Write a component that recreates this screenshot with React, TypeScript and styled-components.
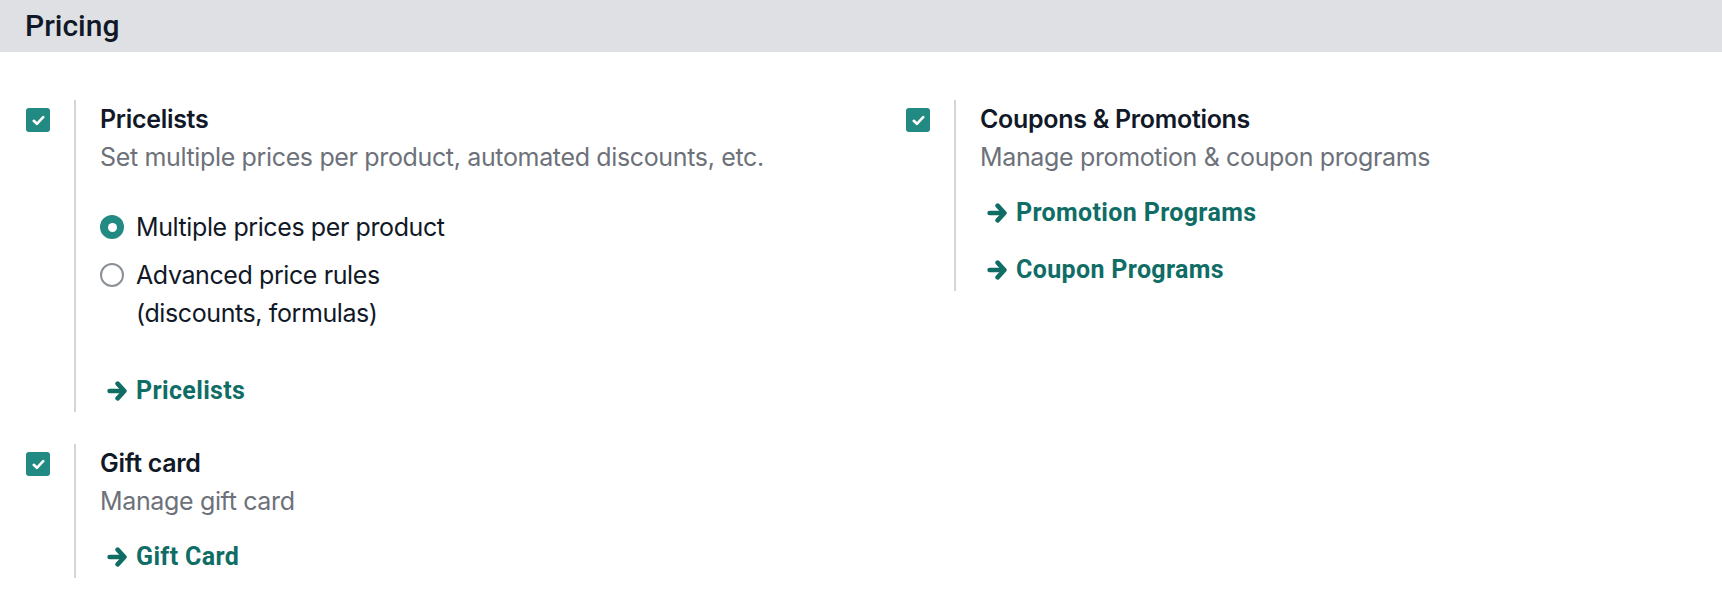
import React from "react";
import styled, { createGlobalStyle } from "styled-components";

const GlobalStyle = createGlobalStyle`
  html, body { margin: 0; padding: 0; background: #ffffff; }
  body { font-family: Inter, "Noto Sans", sans-serif; color: #111827; }
`;

const Page = styled.div`
  width: 1722px;
  height: 608px;
  background: #ffffff;
  overflow: hidden;
`;

const SectionHeader = styled.div`
  height: 52px;
  background: #dee0e4;
  display: flex;
  align-items: center;
  padding: 0 25px;
  box-sizing: border-box;
`;

const SectionTitle = styled.h2`
  margin: 0;
  font-family: Roboto, "Liberation Sans", sans-serif;
  font-weight: 500;
  font-size: 30px;
  line-height: 36px;
  color: #111827;
`;

const Grid = styled.div`
  display: grid;
  grid-template-columns: 880px 1fr;
  row-gap: 32px;
  padding-top: 48px;
  align-items: start;
`;

const Box = styled.div`
  display: grid;
  grid-template-columns: 74px 1fr;
`;

const CheckCol = styled.div`
  padding-left: 26px;
  padding-top: 8px;
`;

const Checkbox = styled.span`
  display: flex;
  align-items: center;
  justify-content: center;
  width: 24px;
  height: 24px;
  border-radius: 3px;
  background: #228a82;
`;

const Body = styled.div`
  border-left: 2px solid #d3d5da;
  padding: 0 0 2px 24px;
  display: flex;
  flex-direction: column;
  align-items: flex-start;
`;

const Title = styled.div`
  font-weight: 600;
  font-size: 25px;
  line-height: 38px;
  letter-spacing: -0.3px;
  color: #111827;
`;

const Description = styled.div`
  font-size: 25px;
  line-height: 38px;
  letter-spacing: -0.35px;
  color: #6d717a;
`;

const RadioGroup = styled.div`
  margin-top: 32px;
  display: flex;
  flex-direction: column;
  gap: 10px;
`;

const RadioRow = styled.label`
  display: flex;
  align-items: flex-start;
  gap: 12px;
  font-size: 25px;
  line-height: 38px;
  letter-spacing: -0.4px;
  color: #111827;
`;

const RadioDot = styled.span<{ $checked?: boolean }>`
  flex: none;
  margin-top: 7px;
  width: 24px;
  height: 24px;
  border-radius: 50%;
  box-sizing: border-box;
  background: ${(p) => (p.$checked ? "#228a82" : "#ffffff")};
  border: ${(p) => (p.$checked ? "none" : "2px solid #8b8f97")};
  display: flex;
  align-items: center;
  justify-content: center;
  &::after {
    content: "";
    display: ${(p) => (p.$checked ? "block" : "none")};
    width: 9px;
    height: 9px;
    border-radius: 50%;
    background: #ffffff;
  }
`;

const LinkButton = styled.a<{ $gap: number }>`
  display: flex;
  align-items: center;
  gap: 9px;
  margin-top: ${(p) => p.$gap}px;
  padding-left: 7px;
  font-family: Roboto, "Liberation Sans", sans-serif;
  font-weight: 700;
  font-size: 25px;
  line-height: 38px;
  letter-spacing: 0.35px;
  color: #0f6d66;
  text-decoration: none;
  cursor: pointer;
`;

const CheckIcon = () => (
  <svg width="13" height="11" viewBox="0 0 13 11" aria-hidden="true">
    <path
      d="M1.8 5.8 L4.9 8.8 L11.2 2.2"
      fill="none"
      stroke="#ffffff"
      strokeWidth="2.6"
      strokeLinecap="round"
      strokeLinejoin="round"
    />
  </svg>
);

const ArrowIcon = () => (
  <svg width="20" height="22" viewBox="0 0 20 22" aria-hidden="true">
    <g
      fill="none"
      stroke="currentColor"
      strokeWidth="4.6"
      strokeLinecap="round"
      strokeLinejoin="round"
    >
      <path d="M2.6 11 H16" />
      <path d="M10.6 3.6 L17.4 11 L10.6 18.4" />
    </g>
  </svg>
);

const Link = ({ label, gap }: { label: string; gap: number }) => (
  <LinkButton $gap={gap}>
    <ArrowIcon />
    <span>{label}</span>
  </LinkButton>
);

const Setting = ({
  title,
  description,
  children,
}: {
  title: string;
  description: string;
  children?: React.ReactNode;
}) => (
  <Box>
    <CheckCol>
      <Checkbox>
        <CheckIcon />
      </Checkbox>
    </CheckCol>
    <Body>
      <Title>{title}</Title>
      <Description>{description}</Description>
      {children}
    </Body>
  </Box>
);

export default function App() {
  return (
    <Page>
      <GlobalStyle />
      <SectionHeader>
        <SectionTitle>Pricing</SectionTitle>
      </SectionHeader>
      <Grid>
        <Setting
          title="Pricelists"
          description="Set multiple prices per product, automated discounts, etc."
        >
          <RadioGroup>
            <RadioRow>
              <RadioDot $checked />
              <span>Multiple prices per product</span>
            </RadioRow>
            <RadioRow>
              <RadioDot />
              <span>
                Advanced price rules
                <br />
                (discounts, formulas)
              </span>
            </RadioRow>
          </RadioGroup>
          <Link label="Pricelists" gap={40} />
        </Setting>
        <Setting
          title="Coupons & Promotions"
          description="Manage promotion & coupon programs"
        >
          <Link label="Promotion Programs" gap={18} />
          <Link label="Coupon Programs" gap={19} />
        </Setting>
        <Setting title="Gift card" description="Manage gift card">
          <Link label="Gift Card" gap={18} />
        </Setting>
      </Grid>
    </Page>
  );
}
